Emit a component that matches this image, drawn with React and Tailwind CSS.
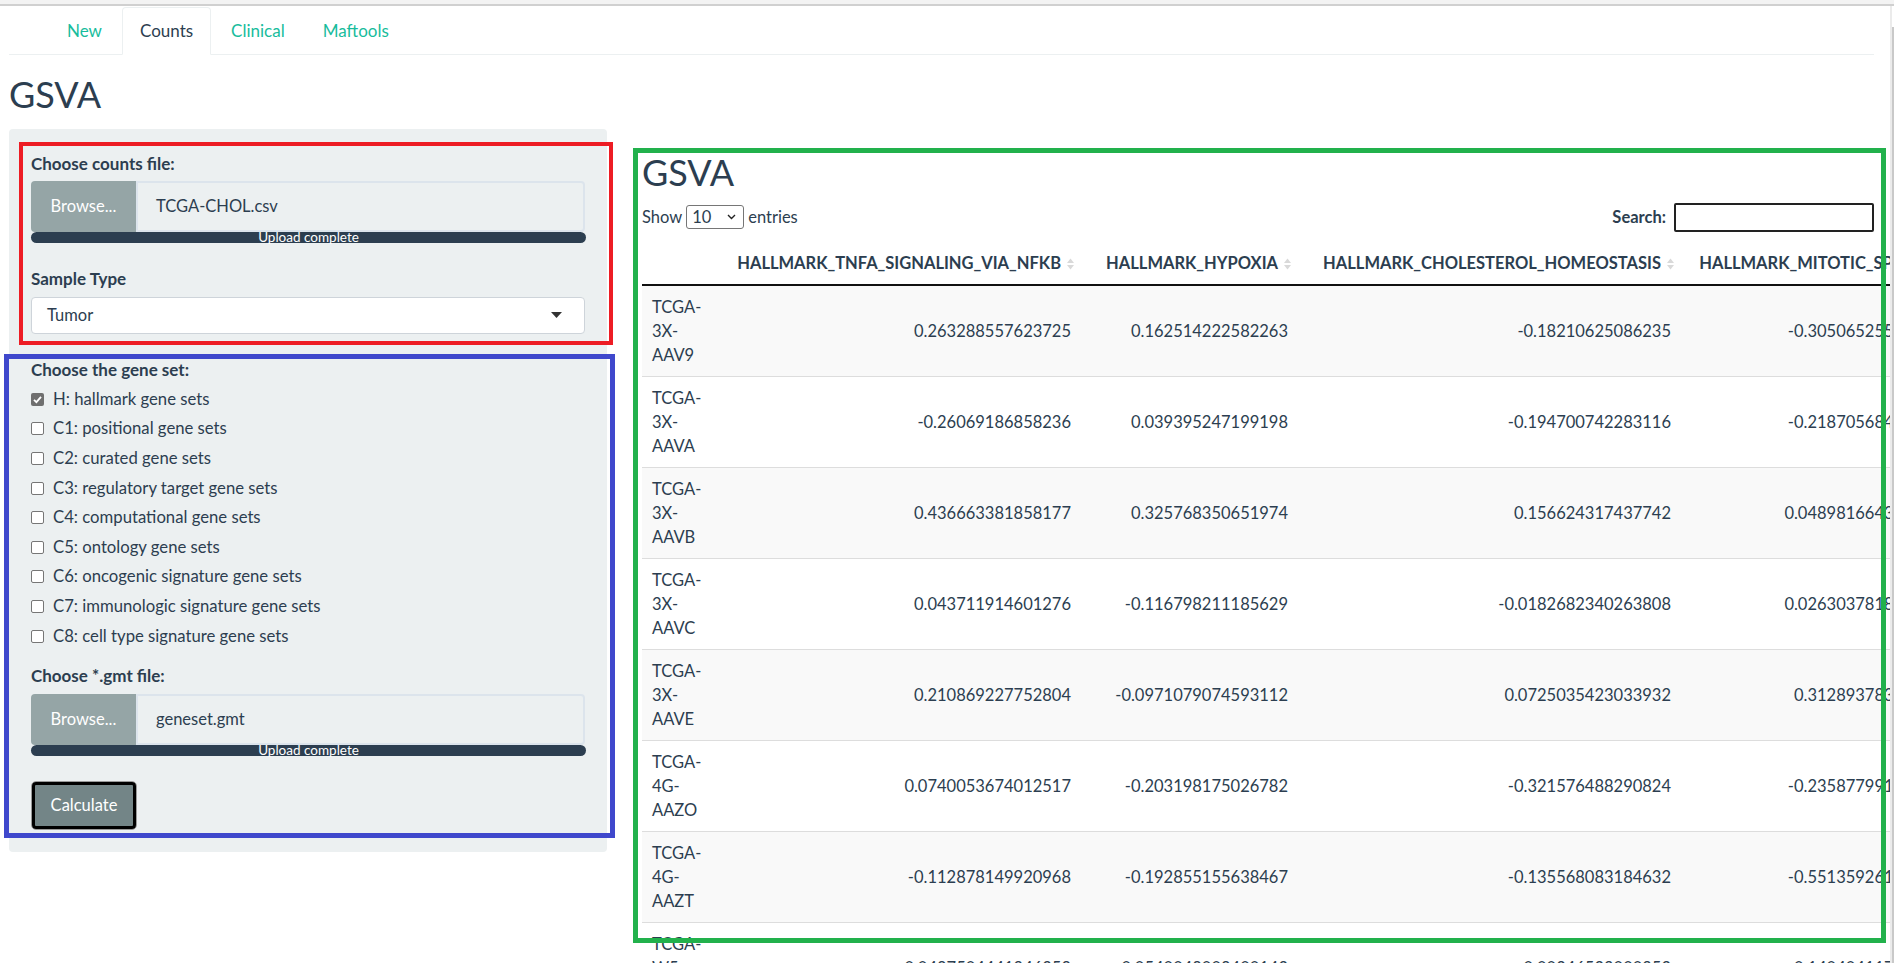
import React from 'react';

const tabs = ['New', 'Counts', 'Clinical', 'Maftools'];

const geneSets = [
  'H: hallmark gene sets',
  'C1: positional gene sets',
  'C2: curated gene sets',
  'C3: regulatory target gene sets',
  'C4: computational gene sets',
  'C5: ontology gene sets',
  'C6: oncogenic signature gene sets',
  'C7: immunologic signature gene sets',
  'C8: cell type signature gene sets',
];

const columns = [
  { name: '', width: 84 },
  { name: 'HALLMARK_TNFA_SIGNALING_VIA_NFKB', width: 355 },
  { name: 'HALLMARK_HYPOXIA', width: 217 },
  { name: 'HALLMARK_CHOLESTEROL_HOMEOSTASIS', width: 383 },
  { name: 'HALLMARK_MITOTIC_SPINDLE', width: 280 },
];

const rows = [
  ['TCGA-3X-AAV9', '0.263288557623725', '0.162514222582263', '-0.18210625086235', '-0.305065255419837'],
  ['TCGA-3X-AAVA', '-0.26069186858236', '0.039395247199198', '-0.194700742283116', '-0.218705684226193'],
  ['TCGA-3X-AAVB', '0.436663381858177', '0.325768350651974', '0.156624317437742', '0.0489816643197527'],
  ['TCGA-3X-AAVC', '0.043711914601276', '-0.116798211185629', '-0.0182682340263808', '0.0263037818421906'],
  ['TCGA-3X-AAVE', '0.210869227752804', '-0.0971079074593112', '0.0725035423033932', '0.312893783659012'],
  ['TCGA-4G-AAZO', '0.0740053674012517', '-0.203198175026782', '-0.321576488290824', '-0.235877991456238'],
  ['TCGA-4G-AAZT', '-0.112878149920968', '-0.192855155638467', '-0.135568083184632', '-0.551359261883147'],
  ['TCGA-W5-AA2I', '0.0487504441946358', '0.0540048008400142', '-0.00246529000952', '0.140404117356291'],
];

function SortIcon() {
  return (
    <svg width="9" height="14" viewBox="0 0 9 14" className="shrink-0">
      <path d="M1 6 L4.5 1.5 L8 6 Z" fill="#d9d9d9" />
      <path d="M1 8 L4.5 12.5 L8 8 Z" fill="#d9d9d9" />
    </svg>
  );
}

function Checkbox({ checked }) {
  if (checked) {
    return (
      <span className="flex h-[13px] w-[13px] items-center justify-center rounded-[2px] bg-[#6f6f6f]">
        <svg width="11" height="11" viewBox="0 0 11 11">
          <path d="M2 5.8 L4.4 8.2 L9 2.8" stroke="white" strokeWidth="1.8" fill="none" />
        </svg>
      </span>
    );
  }
  return <span className="h-[13px] w-[13px] rounded-[2px] border border-[#767676] bg-white" />;
}

function FileInput({ name }) {
  return (
    <div>
      <div className="flex h-[51px]">
        <span className="flex w-[105px] items-center justify-center rounded-l-[4px] bg-[#95a5a6] text-white">
          Browse...
        </span>
        <div className="flex flex-1 items-center rounded-r-[4px] border-2 border-[#dce4ec] bg-[#ecf0f1] pl-[18px]">
          {name}
        </div>
      </div>
      <div className="h-[11px] w-[555px] rounded-full bg-[#2c3e50] text-center text-[13.5px] leading-[11px] text-white">
        Upload complete
      </div>
    </div>
  );
}

function Sidebar() {
  return (
    <div className="w-[598px] shrink-0 rounded-[4px] bg-[#ecf0f1] px-[22px] pt-[23px] pb-[22px]">
      {/* counts file + sample type */}
      <div className="text-[17px] font-bold leading-[24px]">Choose counts file:</div>
      <div className="mt-[5px]">
        <FileInput name="TCGA-CHOL.csv" />
      </div>
      <div className="mt-[24px] text-[17px] font-bold leading-[24px]">Sample Type</div>
      <div className="mt-[6px] flex h-[37px] items-center justify-between rounded-[4px] border border-[#ced4da] bg-white pl-[15px] pr-[22px]">
        <span>Tumor</span>
        <svg width="11" height="6" viewBox="0 0 11 6">
          <path d="M0 0 L11 0 L5.5 6 Z" fill="#333" />
        </svg>
      </div>

      {/* gene sets */}
      <div className="mt-[24px] text-[17px] font-bold leading-[24px]">Choose the gene set:</div>
      <div className="mt-[3px] flex flex-col text-[16.7px]">
        {geneSets.map((g, i) => (
          <label key={g} className="flex h-[29.6px] items-center gap-[9px]">
            <Checkbox checked={i === 0} />
            <span>{g}</span>
          </label>
        ))}
      </div>
      <div className="mt-[13px] text-[17px] font-bold leading-[24px]">Choose *.gmt file:</div>
      <div className="mt-[6px]">
        <FileInput name="geneset.gmt" />
      </div>
      <button className="mt-[25px] flex h-[49px] w-[106px] items-center justify-center rounded-[5px] border border-[#9a9a9a] p-0">
        <span className="flex h-full w-full items-center justify-center rounded-[4px] border-[3px] border-black bg-[#738587] text-white">
          Calculate
        </span>
      </button>
    </div>
  );
}

function ResultTable() {
  return (
    <table className="table-fixed border-collapse" style={{ width: columns.reduce((s, c) => s + c.width, 0) }}>
      <colgroup>
        {columns.map((c, i) => (
          <col key={i} style={{ width: c.width }} />
        ))}
      </colgroup>
      <thead>
        <tr>
          {columns.map((c, i) => (
            <th key={i} className="h-[42px] border-b-2 border-[#111] pl-[10px] pr-[6px] text-right font-bold whitespace-nowrap">
              {c.name && (
                <span className="inline-flex items-center gap-[5px]">
                  {c.name}
                  <SortIcon />
                </span>
              )}
            </th>
          ))}
        </tr>
      </thead>
      <tbody>
        {rows.map((r, ri) => (
          <tr key={r[0]} className={`border-b border-[#dddddd] ${ri % 2 === 0 ? 'bg-[#f9f9f9]' : 'bg-white'}`}>
            <td className="px-[10px] py-[9px] text-left leading-[24px]">
              {r[0].split(/(?<=-)/).map((part) => (
                <span key={part} className="block">{part}</span>
              ))}
            </td>
            {r.slice(1).map((v, ci) => (
              <td key={ci} className="px-[10px] py-[9px] text-right leading-[24px] whitespace-nowrap">
                {v}
              </td>
            ))}
          </tr>
        ))}
      </tbody>
    </table>
  );
}

export default function App() {
  return (
    <div className="relative flex h-[963px] w-full flex-col overflow-hidden bg-white font-['Lato',sans-serif] text-[16.5px] text-[#2c3e50]">
      {/* browser top edge */}
      <div className="h-[6px] shrink-0 border-b-2 border-[#d0d0d0] bg-[#f3f3f3]" />

      <div className="flex min-h-0 flex-1">
        <div className="min-w-0 flex-1 overflow-hidden pl-[9px] pr-[16px]">
          {/* tabs */}
          <ul className="mt-[1px] flex border-b border-[#ecf0f1] pl-[40px]">
            {tabs.map((t) => (
              <li key={t} className="-mb-px mr-[2px]">
                <a
                  className={`block rounded-t-[4px] border px-[17px] py-[11px] text-[17px] leading-[24px] ${
                    t === 'Counts'
                      ? 'border-[#ecf0f1] border-b-white bg-white text-[#2c3e50]'
                      : 'border-transparent text-[#18bc9c]'
                  }`}
                >
                  {t}
                </a>
              </li>
            ))}
          </ul>

          <h2 className="mt-[20px] mb-[14px] text-[36px] leading-[1.1] font-normal">GSVA</h2>

          <div className="flex items-start">
            <Sidebar />

            <div className="ml-[35px] min-w-0 flex-1 pt-[24px]">
              <h2 className="text-[36px] leading-[1.1] font-normal">GSVA</h2>

              <div className="mt-[11px] flex items-start justify-between">
                <div className="flex h-[28px] items-center gap-[4px]">
                  <span>Show</span>
                  <span className="flex h-[24px] w-[58px] items-center justify-between rounded-[3px] border border-[#767676] bg-white pl-[5px] pr-[7px]">
                    <span>10</span>
                    <svg width="9" height="6" viewBox="0 0 9 6">
                      <path d="M1 1 L4.5 4.5 L8 1" stroke="#222" strokeWidth="1.4" fill="none" />
                    </svg>
                  </span>
                  <span>entries</span>
                </div>
                <div className="flex h-[29px] items-center gap-[8px]">
                  <span className="font-bold">Search:</span>
                  <span className="h-[29px] w-[200px] rounded-[2px] border-2 border-[#222] bg-white" />
                </div>
              </div>

              <div className="mt-[11px]">
                <ResultTable />
              </div>
            </div>
          </div>
        </div>

        {/* vertical scrollbar */}
        <div className="flex w-[4px] shrink-0 border-l-2 border-[#ebebeb]">
          <div className="flex w-[2px] flex-col">
            <div className="h-[21px] bg-white" />
            <div className="flex-1 bg-[#c9c9c9]" />
          </div>
        </div>
      </div>

      {/* annotation frames drawn over the screenshot */}
      <div className="pointer-events-none absolute left-[19px] top-[142px] h-[203px] w-[594px] border-4 border-[#ed1c24]" />
      <div className="pointer-events-none absolute left-[4px] top-[354px] h-[484px] w-[611px] border-[5px] border-[#3f48cc]" />
      <div className="pointer-events-none absolute left-[633px] top-[148px] h-[795px] w-[1253px] border-[5px] border-[#22b14c]" />
    </div>
  );
}
